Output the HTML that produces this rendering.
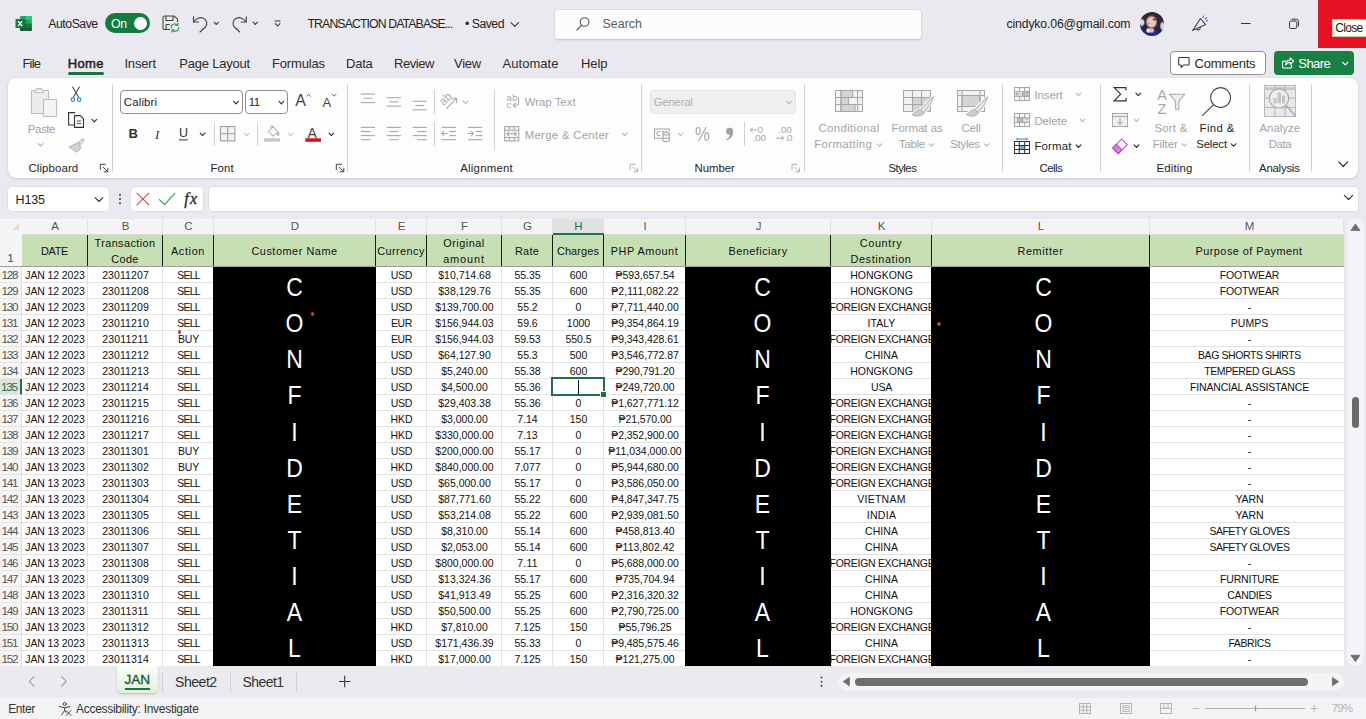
<!DOCTYPE html>
<html lang="en">
<head>
<meta charset="utf-8">
<title>TRANSACTION DATABASE - Excel</title>
<style>
*{box-sizing:border-box;margin:0;padding:0}
html,body{width:1366px;height:719px;overflow:hidden;background:#eae9f0;font-family:"Liberation Sans",sans-serif;color:#242424}
#app{position:relative;width:1366px;height:719px;overflow:hidden;background:#eae9f0}
svg{position:absolute;overflow:visible}
.abs{position:absolute}
/* ---- grid ---- */
#grid{position:absolute;left:0;top:218px;width:1344px;height:448px;overflow:hidden;background:#fff}
#grid>div{position:absolute}
#gl{left:0;top:49px;width:1344px;height:400px;background-image:linear-gradient(to bottom,transparent 15px,#e1e1e1 15px);background-size:100% 16px}
.vl{top:48px;width:1px;height:400px;background:#e1e1e1}
.rd{width:3.4px;height:3.4px;border-radius:2px;background:#d23a30;z-index:4}
#frz{left:0;top:48px;width:1344px;height:1px;background:#9c9c9c}
#selbox{left:551px;top:159px;width:54px;height:19px;border:2px solid #1f7244;background:#fff}
#selh{left:600px;top:173px;width:5px;height:5px;background:#1f7244;border:1px solid #fff;border-right:none;border-bottom:none;box-sizing:content-box}
#caret{left:578px;top:162px;width:1px;height:14px;background:#111}
.ch{top:1px;height:16px;background:#f5f5f5;border-right:1px solid #e3e3e3;border-bottom:1px solid #dadada;font-size:11.5px;line-height:14px;color:#555}
.ch b{position:absolute;width:20px;text-align:center;font-weight:normal;top:0}
.ch.sel{background:#e1e1e1;color:#1f7244;border-bottom:2px solid #1f7244;height:16px;z-index:3;border-right:none}
.hc{top:17px;height:31px;padding-top:0.5px;background:#c6e0b4;border-right:1px solid #1a1a1a;font-size:10.9px;line-height:16px;text-align:center;color:#111;display:flex;align-items:center;justify-content:center;white-space:nowrap}
.rn{left:0;width:22px;height:16px;background:#f5f5f5;border-bottom:1px solid #e6e6e6;border-right:1px solid #e0e0e0;font-size:11.7px;line-height:16px;text-align:center;color:#555;letter-spacing:-1.25px;padding-right:2px}
.rn.cur{background:#e1e1e1;color:#1f7244;border-right:2px solid #1f7244}
.c{height:16px;font-size:10.5px;line-height:17px;text-align:center;white-space:nowrap;color:#111}
.conf{top:49px;height:400px;background:#000;color:#fff;overflow:hidden}
.cv{position:absolute;left:0;top:0;height:420px;padding-top:6.2px;font-size:25px;writing-mode:vertical-rl;text-orientation:upright;letter-spacing:8.15px;text-align:left;white-space:nowrap}
</style>
</head>
<body>
<div id="app">
<svg style="left:0;top:0" width="1" height="1" ><g transform="translate(15.5,15.5)">
<path d="M5.5 0.5 H15.3 a1 1 0 0 1 1 1 V14.5 a1 1 0 0 1 -1 1 H5.5 a1 1 0 0 1 -1 -1 V1.5 a1 1 0 0 1 1 -1z" fill="#21a366"/>
<path d="M10.5 0.5 H15.3 a1 1 0 0 1 1 1 V4.3 H10.5z" fill="#33c481"/>
<path d="M4.5 4.3 H10.5 V8 H4.5z" fill="#107c41"/>
<path d="M10.5 8 H16.3 V11.7 H10.5z" fill="#107c41"/>
<path d="M4.5 8 H10.5 V11.7 H4.5z" fill="#185c37"/>
<path d="M4.5 11.7 H16.3 V14.5 a1 1 0 0 1 -1 1 H5.5 a1 1 0 0 1 -1 -1z" fill="#185c37"/>
<rect x="0" y="3.6" width="9.2" height="8.9" rx="0.9" fill="#107c41"/>
<path d="M2.6 5.6 L6.6 10.5 M6.6 5.6 L2.6 10.5" stroke="#fff" stroke-width="1.35" fill="none"/>
</g></svg>
<span style="position:absolute;white-space:nowrap;left:48.3px;top:18.1px;font-size:12.3px;line-height:12.3px;color:#242424;letter-spacing:-0.49px;">AutoSave</span>
<div class="abs" style="left:105px;top:13px;width:45px;height:20px;border-radius:10px;background:#107c41"></div>
<div class="abs" style="left:133.5px;top:16.5px;width:13px;height:13px;border-radius:7px;background:#fff"></div>
<span style="position:absolute;white-space:nowrap;left:111.0px;top:17.8px;font-size:12.3px;line-height:12.3px;color:#fff;letter-spacing:-0.20px;">On</span>
<svg style="left:0;top:0" width="1" height="1" ><g fill="none" stroke="#444" stroke-width="1.1" stroke-linejoin="round">
<path d="M170 29.5 H164.5 a1.5 1.5 0 0 1 -1.5 -1.5 V17.5 a1.5 1.5 0 0 1 1.5 -1.5 H174 l3.5 3.2 V22"/>
<path d="M166 16 V20.5 H173 V16"/>
<path d="M166 29.5 V24.5 H169.5"/>
</g>
<g fill="none" stroke="#3aa35f" stroke-width="1.2" stroke-linecap="round" stroke-linejoin="round">
<path d="M171.2 27.8 a3.6 3.6 0 0 1 6.3 -2.6 M177.8 23.2 v2.2 h-2.2"/>
<path d="M178.6 27.4 a3.6 3.6 0 0 1 -6.3 2.6 M172 32 v-2.2 h2.2"/>
</g></svg>
<svg style="left:0;top:0" width="1" height="1" ><g fill="none" stroke="#444" stroke-width="1.15" stroke-linecap="round" stroke-linejoin="round">
<path d="M193.5 16.8 V22 H198.7"/>
<path d="M193.8 21.8 C196 18.5 200 16.6 203.5 18.3 C207.2 20.2 207.6 24.6 205.4 27 L200 32"/>
</g></svg>
<svg style="left:0;top:0" width="1" height="1"><path d="M214.1 22.2 L216.3 24.5 L218.5 22.2" fill="none" stroke="#444" stroke-width="1.1" stroke-linecap="round" stroke-linejoin="round"/></svg>
<svg style="left:0;top:0" width="1" height="1" ><g fill="none" stroke="#444" stroke-width="1.15" stroke-linecap="round" stroke-linejoin="round">
<path d="M246.3 16.8 V22 H241.1"/>
<path d="M246 21.8 C243.8 18.5 239.8 16.6 236.3 18.3 C232.6 20.2 232.2 24.6 234.4 27 L239.8 32"/>
</g></svg>
<svg style="left:0;top:0" width="1" height="1"><path d="M253.1 22.2 L255.3 24.5 L257.5 22.2" fill="none" stroke="#444" stroke-width="1.1" stroke-linecap="round" stroke-linejoin="round"/></svg>
<svg style="left:0;top:0" width="1" height="1" ><path d="M274.6 21 H280.6" stroke="#444" stroke-width="1.1" fill="none"/></svg>
<svg style="left:0;top:0" width="1" height="1"><path d="M275.3 23.6 L277.6 26.0 L279.9 23.6" fill="none" stroke="#444" stroke-width="1.1" stroke-linecap="round" stroke-linejoin="round"/></svg>
<span style="position:absolute;white-space:nowrap;left:307.5px;top:18.2px;font-size:12.3px;line-height:12.3px;color:#242424;letter-spacing:-0.90px;">TRANSACTION DATABASE...</span>
<span style="position:absolute;white-space:nowrap;left:465.0px;top:18.2px;font-size:12.3px;line-height:12.3px;color:#242424;letter-spacing:-0.51px;">• Saved</span>
<svg style="left:0;top:0" width="1" height="1"><path d="M511.0 22.6 L514.8 26.4 L518.5 22.6" fill="none" stroke="#333" stroke-width="1.1" stroke-linecap="round" stroke-linejoin="round"/></svg>
<div class="abs" style="left:554px;top:9px;width:368px;height:31px;border-radius:4px;background:#fcfcfd;border:1px solid #dcdce0;border-bottom-color:#c9c9ce;box-shadow:0 1px 2px rgba(0,0,0,.06)"></div>
<svg style="left:0;top:0" width="1" height="1" ><circle cx="584.6" cy="22" r="4.3" fill="none" stroke="#555" stroke-width="1.1"/><path d="M581.6 25.2 L577 30" stroke="#555" stroke-width="1.1" stroke-linecap="round"/></svg>
<span style="position:absolute;white-space:nowrap;left:602.5px;top:18.3px;font-size:12.3px;line-height:12.3px;color:#5a5a5a;letter-spacing:0.09px;">Search</span>
<span style="position:absolute;white-space:nowrap;left:1006.5px;top:18.2px;font-size:12.3px;line-height:12.3px;color:#242424;letter-spacing:-0.17px;">cindyko.06@gmail.com</span>
<div class="abs" style="left:1139.8px;top:11.5px;width:24px;height:24px;border-radius:12px;overflow:hidden;background:#e4e4ea"><div class="abs" style="left:-1px;top:-1px;width:26px;height:26px;filter:blur(0.5px);background:
radial-gradient(ellipse 2px 1.2px at 9.5px 12.5px,#d98a9a 60%,transparent 100%),
radial-gradient(ellipse 2.4px 1.3px at 15.5px 8.5px,#5a3a3c 40%,transparent 100%),
radial-gradient(ellipse 6.2px 7px at 12.5px 11px,#ecc8ba 62%,transparent 100%),
radial-gradient(ellipse 3.4px 3px at 12.5px 19.5px,#e3bfb2 50%,transparent 100%),
radial-gradient(ellipse 3px 3px at 9.5px 19.5px,#f4f4f8 40%,transparent 100%),
radial-gradient(ellipse 11px 6.5px at 12px 24.5px,#1b2b86 72%,transparent 100%),
radial-gradient(ellipse 3px 4.4px at 3px 11.5px,#d3dfea 50%,transparent 100%),
radial-gradient(ellipse 3px 5px at 23.5px 15px,#ccd8cf 50%,transparent 100%),
radial-gradient(ellipse 10.5px 10px at 12.5px 10.5px,#33262b 80%,transparent 100%),
#20264e"></div></div>
<svg style="left:0;top:0" width="1" height="1" ><g fill="none" stroke="#444" stroke-width="1.1" stroke-linejoin="round" stroke-linecap="round">
<path d="M1200.5 18.5 L1205.5 24.6 L1192.6 30.6 Z"/>
<path d="M1196.6 29 a2 2 0 0 0 3.6 -1.6"/>
</g>
<g stroke="#2b7cd3" stroke-width="1.1" stroke-linecap="round"><path d="M1203 17.4 L1203.6 16 M1205 19 L1206.6 17.6 M1206.2 21 L1207.6 20.6"/></g></svg>
<svg style="left:0;top:0" width="1" height="1" ><path d="M1241 23.5 H1250.5" stroke="#333" stroke-width="1"/></svg>
<svg style="left:0;top:0" width="1" height="1" ><rect x="1289.5" y="21" width="7.3" height="7.5" rx="1.6" fill="none" stroke="#333" stroke-width="1"/><path d="M1291.6 19.2 H1296.3 a2.2 2.2 0 0 1 2.2 2.2 V26.3" fill="none" stroke="#333" stroke-width="1"/></svg>
<div class="abs" style="left:1318px;top:0;width:48px;height:48px;background:#e81123"></div>
<div class="abs" style="left:1332px;top:19px;width:34px;height:18px;background:#ffffea;border:1px solid #c9c9bd;border-right:none"></div>
<span style="position:absolute;white-space:nowrap;left:1335.3px;top:21.8px;font-size:12px;line-height:12px;color:#1a1a1a;letter-spacing:-0.68px;">Close</span>
<span style="position:absolute;white-space:nowrap;left:22.4px;top:57.2px;font-size:13px;line-height:13px;color:#2b2b2b;letter-spacing:-0.76px;">File</span>
<span style="position:absolute;white-space:nowrap;left:67.7px;top:57.2px;font-size:13px;line-height:13px;color:#1f1f1f;letter-spacing:0.36px;-webkit-text-stroke:0.5px #1f1f1f;">Home</span>
<span style="position:absolute;white-space:nowrap;left:124.4px;top:57.2px;font-size:13px;line-height:13px;color:#2b2b2b;letter-spacing:-0.15px;">Insert</span>
<span style="position:absolute;white-space:nowrap;left:179.2px;top:57.2px;font-size:13px;line-height:13px;color:#2b2b2b;letter-spacing:-0.20px;">Page Layout</span>
<span style="position:absolute;white-space:nowrap;left:272.0px;top:57.2px;font-size:13px;line-height:13px;color:#2b2b2b;letter-spacing:-0.17px;">Formulas</span>
<span style="position:absolute;white-space:nowrap;left:346.0px;top:57.2px;font-size:13px;line-height:13px;color:#2b2b2b;letter-spacing:-0.24px;">Data</span>
<span style="position:absolute;white-space:nowrap;left:394.0px;top:57.2px;font-size:13px;line-height:13px;color:#2b2b2b;letter-spacing:-0.44px;">Review</span>
<span style="position:absolute;white-space:nowrap;left:454.0px;top:57.2px;font-size:13px;line-height:13px;color:#2b2b2b;letter-spacing:-0.24px;">View</span>
<span style="position:absolute;white-space:nowrap;left:502.5px;top:57.2px;font-size:13px;line-height:13px;color:#2b2b2b;letter-spacing:0.04px;">Automate</span>
<span style="position:absolute;white-space:nowrap;left:581.0px;top:57.2px;font-size:13px;line-height:13px;color:#2b2b2b;letter-spacing:-0.06px;">Help</span>
<div class="abs" style="left:68px;top:72px;width:36px;height:3px;border-radius:1.5px;background:#1e7145"></div>
<div class="abs" style="left:1170px;top:51px;width:96px;height:24px;border-radius:4px;background:#fff;border:1px solid #919191"></div>
<svg style="left:0;top:0" width="1" height="1" ><path d="M1179.5 57.5 H1188.3 a0.8 0.8 0 0 1 .8 .8 V64.2 a0.8 0.8 0 0 1 -.8 .8 H1183.6 L1181.2 67.6 V65 H1179.5 a0.8 0.8 0 0 1 -.8 -.8 V58.3 a0.8 0.8 0 0 1 .8 -.8z" fill="none" stroke="#333" stroke-width="1.05" stroke-linejoin="round"/></svg>
<span style="position:absolute;white-space:nowrap;left:1194.6px;top:56.6px;font-size:13px;line-height:13px;color:#1f1f1f;letter-spacing:-0.27px;">Comments</span>
<div class="abs" style="left:1274px;top:51px;width:80px;height:24px;border-radius:4px;background:#1a7f45"></div>
<svg style="left:0;top:0" width="1" height="1" ><g fill="none" stroke="#fff" stroke-width="1.1" stroke-linejoin="round" stroke-linecap="round">
<path d="M1286 61 H1283.6 a1 1 0 0 0 -1 1 V67 a1 1 0 0 0 1 1 H1290.6 a1 1 0 0 0 1 -1 V65"/>
<path d="M1285.6 65 C1285.8 61.5 1288 60 1290.2 60 V57.8 L1293.6 61.1 L1290.2 64.4 V62.2 C1288.4 62.2 1286.8 62.8 1285.6 65z"/>
</g></svg>
<span style="position:absolute;white-space:nowrap;left:1298.3px;top:56.6px;font-size:13px;line-height:13px;color:#fff;letter-spacing:-0.54px;">Share</span>
<svg style="left:0;top:0" width="1" height="1"><path d="M1342.7 62.3 L1345.2 64.9 L1347.7 62.3" fill="none" stroke="#fff" stroke-width="1.2" stroke-linecap="round" stroke-linejoin="round"/></svg>
<div class="abs" style="left:8px;top:78px;width:1350px;height:100px;border-radius:8px;background:#fdfdfe;box-shadow:0 1px 3px rgba(0,0,0,.13),0 0 1px rgba(0,0,0,.10)"></div>
<svg style="left:0;top:0" width="1" height="1" ><g stroke="#bdbdbd" stroke-width="1.1" stroke-linejoin="round">
<path d="M31.5 90.5 H35.6 C35.6 87.6 42.4 87.6 42.4 90.5 H48.5 V113.5 H31.5z" fill="#ececec"/>
<path d="M34.8 90.5 V92.8 H43.2 V90.5" fill="#f6f6f6"/>
<rect x="43.5" y="99.5" width="13" height="17" fill="#f4f4f4"/>
</g></svg>
<span style="position:absolute;white-space:nowrap;left:27.8px;top:123.5px;font-size:11.4px;line-height:11.4px;color:#a3a3a3;letter-spacing:-0.39px;">Paste</span>
<svg style="left:0;top:0" width="1" height="1"><path d="M38.4 143.6 L40.7 146.0 L43.0 143.6" fill="none" stroke="#b5b5b5" stroke-width="1.1" stroke-linecap="round" stroke-linejoin="round"/></svg>
<svg style="left:0;top:0" width="1" height="1" ><g fill="none" stroke-linecap="round">
<path d="M72.6 87 L78.6 97.2 M79.4 87 L73.4 97.2" stroke="#444" stroke-width="1.05"/>
<circle cx="72.9" cy="99.6" r="1.75" stroke="#2b7cd3" stroke-width="1.05"/>
<circle cx="79.1" cy="99.6" r="1.75" stroke="#2b7cd3" stroke-width="1.05"/>
</g></svg>
<svg style="left:0;top:0" width="1" height="1" ><g fill="none" stroke="#333" stroke-width="1.1" stroke-linejoin="round">
<path d="M74.5 125 H68.6 V112.6 H75.2"/>
<path d="M74.5 115.6 H80.4 L83.5 118.8 V127.4 H74.5z" fill="#fdfdfe"/>
<path d="M76.8 121 H81.2 M76.8 123.6 H81.2" stroke-width="0.9"/>
</g></svg>
<svg style="left:0;top:0" width="1" height="1"><path d="M92.1 119.4 L94.4 121.8 L96.7 119.4" fill="none" stroke="#333" stroke-width="1.2" stroke-linecap="round" stroke-linejoin="round"/></svg>
<svg style="left:0;top:0" width="1" height="1" ><g stroke="#b0b0b0" stroke-width="1" stroke-linejoin="round">
<path d="M69.2 147 L78.2 142.4 L81 147.8 L76.4 152.2 C74 150 71.6 148.6 69.2 147z" fill="#d5d5d5"/>
<path d="M78.6 142.2 L82.6 138.6 L84 140.4 L80.8 144.6z" fill="#e4e4e4"/>
</g></svg>
<span style="position:absolute;white-space:nowrap;left:28.5px;top:162.7px;font-size:11.4px;line-height:11.4px;color:#242424;letter-spacing:0.11px;">Clipboard</span>
<svg style="left:0;top:0" width="1" height="1" ><path d="M100.3 169.8 V164.3 H105.8" fill="none" stroke="#444" stroke-width="1"/><path d="M102.8 166.8 L107.5 171.5 M107.8 167.70000000000002 V171.8 H103.7" fill="none" stroke="#444" stroke-width="1"/></svg>
<div class="abs" style="left:112px;top:84px;width:1px;height:88px;background:#d1d1d1"></div>
<div class="abs" style="left:120px;top:90px;width:123px;height:24px;border-radius:4px;background:#fff;border:1px solid #8f8f8f"></div>
<span style="position:absolute;white-space:nowrap;left:123.8px;top:96.7px;font-size:11.4px;line-height:11.4px;color:#242424;letter-spacing:0.17px;">Calibri</span>
<svg style="left:0;top:0" width="1" height="1"><path d="M233.7 101.4 L236.0 103.8 L238.3 101.4" fill="none" stroke="#333" stroke-width="1.2" stroke-linecap="round" stroke-linejoin="round"/></svg>
<div class="abs" style="left:245px;top:90px;width:43px;height:24px;border-radius:4px;background:#fff;border:1px solid #8f8f8f"></div>
<span style="position:absolute;white-space:nowrap;left:248.8px;top:96.7px;font-size:11.4px;line-height:11.4px;color:#242424;letter-spacing:-0.52px;">11</span>
<svg style="left:0;top:0" width="1" height="1"><path d="M279.0 101.4 L281.3 103.8 L283.6 101.4" fill="none" stroke="#333" stroke-width="1.2" stroke-linecap="round" stroke-linejoin="round"/></svg>
<span style="position:absolute;white-space:nowrap;left:295.3px;top:93.3px;font-size:16px;line-height:16px;color:#444;letter-spacing:0.23px;">A</span>
<svg style="left:0;top:0" width="1" height="1"><path d="M306.8 96.2 L308.6 94.2 L310.4 96.2" fill="none" stroke="#2b7cd3" stroke-width="1.0" stroke-linecap="round" stroke-linejoin="round"/></svg>
<span style="position:absolute;white-space:nowrap;left:322.6px;top:95.8px;font-size:13px;line-height:13px;color:#444;letter-spacing:0.03px;">A</span>
<svg style="left:0;top:0" width="1" height="1"><path d="M332.4 94.2 L334.2 96.2 L336.0 94.2" fill="none" stroke="#2b7cd3" stroke-width="1.0" stroke-linecap="round" stroke-linejoin="round"/></svg>
<span style="position:absolute;white-space:nowrap;left:128.4px;top:127.4px;font-size:13px;line-height:13px;color:#333;letter-spacing:-1.39px;font-weight:bold;">B</span>
<span style="position:absolute;white-space:nowrap;left:155.0px;top:127.5px;font-size:13px;line-height:13px;color:#333;letter-spacing:1.17px;font-style:italic;font-family:'Liberation Serif',serif;">I</span>
<span style="position:absolute;white-space:nowrap;left:179.0px;top:127.2px;font-size:12.5px;line-height:12.5px;color:#333;letter-spacing:-0.23px;">U</span>
<svg style="left:0;top:0" width="1" height="1" ><path d="M179 139.9 H187.8" stroke="#333" stroke-width="1.0" fill="none"/></svg>
<svg style="left:0;top:0" width="1" height="1"><path d="M200.3 133.2 L202.6 135.6 L204.9 133.2" fill="none" stroke="#333" stroke-width="1.2" stroke-linecap="round" stroke-linejoin="round"/></svg>
<div class="abs" style="left:213.5px;top:123px;width:1px;height:23px;background:#d1d1d1"></div>
<svg style="left:0;top:0" width="1" height="1" ><rect x="220.5" y="126.5" width="14.4" height="14.4" fill="#f2f2f2" stroke="#9f9f9f" stroke-width="1.1"/>
<path d="M227.7 126.5 V140.9 M220.5 133.7 H234.9" stroke="#9f9f9f" stroke-width="1.1"/></svg>
<svg style="left:0;top:0" width="1" height="1"><path d="M244.4 133.2 L246.7 135.6 L249.0 133.2" fill="none" stroke="#c4c4c4" stroke-width="1.1" stroke-linecap="round" stroke-linejoin="round"/></svg>
<div class="abs" style="left:257px;top:123px;width:1px;height:23px;background:#d1d1d1"></div>
<svg style="left:0;top:0" width="1" height="1" ><g fill="none" stroke="#b3b3b3" stroke-width="1.05" stroke-linejoin="round">
<path d="M268.4 131.4 L273.2 126.8 L278 131.8 L273 136.2z"/>
<path d="M271.2 128.4 C270 125.6 272.6 124.8 273.6 127"/>
<path d="M278.2 132.4 C279.2 133.8 279.2 135 278.2 135.4 C277.2 135 277.2 133.8 278.2 132.4z" fill="#b3b3b3"/>
</g>
<rect x="264" y="138.3" width="16" height="3.4" fill="#c8c8c8"/></svg>
<svg style="left:0;top:0" width="1" height="1"><path d="M288.3 133.2 L290.6 135.6 L292.9 133.2" fill="none" stroke="#c4c4c4" stroke-width="1.1" stroke-linecap="round" stroke-linejoin="round"/></svg>
<span style="position:absolute;white-space:nowrap;left:307.6px;top:125.6px;font-size:14px;line-height:14px;color:#444;letter-spacing:1.46px;">A</span>
<svg style="left:0;top:0" width="1" height="1" ><rect x="305.4" y="138.3" width="15.6" height="3.5" fill="#e00b1c"/></svg>
<svg style="left:0;top:0" width="1" height="1"><path d="M329.1 133.2 L331.4 135.6 L333.7 133.2" fill="none" stroke="#333" stroke-width="1.2" stroke-linecap="round" stroke-linejoin="round"/></svg>
<span style="position:absolute;white-space:nowrap;left:210.5px;top:162.7px;font-size:11.4px;line-height:11.4px;color:#242424;letter-spacing:0.15px;">Font</span>
<svg style="left:0;top:0" width="1" height="1" ><path d="M336.3 169.8 V164.3 H341.8" fill="none" stroke="#444" stroke-width="1"/><path d="M338.8 166.8 L343.5 171.5 M343.8 167.70000000000002 V171.8 H339.7" fill="none" stroke="#444" stroke-width="1"/></svg>
<div class="abs" style="left:347px;top:84px;width:1px;height:88px;background:#d1d1d1"></div>
<svg style="left:0;top:0" width="1" height="1" ><path d="M360.8 94 H375.0" stroke="#a8a8a8" stroke-width="1.1" fill="none"/><path d="M363.6 98.3 H372.2" stroke="#a8a8a8" stroke-width="1.1" fill="none"/><path d="M360.8 102.6 H375.0" stroke="#a8a8a8" stroke-width="1.1" fill="none"/></svg>
<svg style="left:0;top:0" width="1" height="1" ><path d="M386.7 97.7 H400.9" stroke="#a8a8a8" stroke-width="1.1" fill="none"/><path d="M389.5 101.9 H398.09999999999997" stroke="#a8a8a8" stroke-width="1.1" fill="none"/><path d="M386.7 106.1 H400.9" stroke="#a8a8a8" stroke-width="1.1" fill="none"/></svg>
<svg style="left:0;top:0" width="1" height="1" ><path d="M412.6 101.3 H426.8" stroke="#a8a8a8" stroke-width="1.1" fill="none"/><path d="M415.40000000000003 105.5 H424.0" stroke="#a8a8a8" stroke-width="1.1" fill="none"/><path d="M412.6 109.8 H426.8" stroke="#a8a8a8" stroke-width="1.1" fill="none"/></svg>
<div class="abs" style="left:434px;top:90px;width:1px;height:24px;background:#d1d1d1"></div>
<span style="position:absolute;white-space:nowrap;left:444.2px;top:96.7px;font-size:11.5px;line-height:11.5px;color:#a8a8a8;letter-spacing:0.00px;transform:rotate(-47deg);transform-origin:0 80%;">ab</span>
<svg style="left:0;top:0" width="1" height="1" ><path d="M446.4 108.6 L456.4 98.4 M452.2 98.2 H456.6 V102.6" fill="none" stroke="#a8a8a8" stroke-width="1.05" stroke-linecap="round" stroke-linejoin="round"/></svg>
<svg style="left:0;top:0" width="1" height="1"><path d="M463.3 101.2 L465.6 103.6 L467.9 101.2" fill="none" stroke="#b5b5b5" stroke-width="1.1" stroke-linecap="round" stroke-linejoin="round"/></svg>
<div class="abs" style="left:493.5px;top:89px;width:1px;height:62px;background:#d1d1d1"></div>
<span style="position:absolute;white-space:nowrap;left:506.6px;top:93.0px;font-size:9.5px;line-height:9.5px;color:#a8a8a8;letter-spacing:0.32px;">ab</span>
<span style="position:absolute;white-space:nowrap;left:506.6px;top:100.4px;font-size:9.5px;line-height:9.5px;color:#a8a8a8;letter-spacing:-0.05px;">c</span>
<svg style="left:0;top:0" width="1" height="1" ><path d="M518.6 98 V103.6 a1.6 1.6 0 0 1 -1.6 1.6 H513.4 M515.6 102.8 L513.2 105.2 L515.6 107.6" fill="none" stroke="#a8a8a8" stroke-width="1.05" stroke-linecap="round" stroke-linejoin="round"/></svg>
<span style="position:absolute;white-space:nowrap;left:524.7px;top:97.4px;font-size:11.4px;line-height:11.4px;color:#a3a3a3;letter-spacing:0.00px;">Wrap Text</span>
<svg style="left:0;top:0" width="1" height="1" ><path d="M360.8 127.4 H375.0" stroke="#a8a8a8" stroke-width="1.1" fill="none"/><path d="M360.8 131.5 H370.40000000000003" stroke="#a8a8a8" stroke-width="1.1" fill="none"/><path d="M360.8 135.6 H375.0" stroke="#a8a8a8" stroke-width="1.1" fill="none"/><path d="M360.8 139.7 H370.40000000000003" stroke="#a8a8a8" stroke-width="1.1" fill="none"/></svg>
<svg style="left:0;top:0" width="1" height="1" ><path d="M386.7 127.4 H400.9" stroke="#a8a8a8" stroke-width="1.1" fill="none"/><path d="M389.5 131.5 H398.09999999999997" stroke="#a8a8a8" stroke-width="1.1" fill="none"/><path d="M386.7 135.6 H400.9" stroke="#a8a8a8" stroke-width="1.1" fill="none"/><path d="M389.5 139.7 H398.09999999999997" stroke="#a8a8a8" stroke-width="1.1" fill="none"/></svg>
<svg style="left:0;top:0" width="1" height="1" ><path d="M412.6 127.4 H426.8" stroke="#a8a8a8" stroke-width="1.1" fill="none"/><path d="M417.20000000000005 131.5 H426.8" stroke="#a8a8a8" stroke-width="1.1" fill="none"/><path d="M412.6 135.6 H426.8" stroke="#a8a8a8" stroke-width="1.1" fill="none"/><path d="M417.20000000000005 139.7 H426.8" stroke="#a8a8a8" stroke-width="1.1" fill="none"/></svg>
<div class="abs" style="left:434px;top:122px;width:1px;height:24px;background:#d1d1d1"></div>
<svg style="left:0;top:0" width="1" height="1" ><path d="M441.6 127.4 H456" stroke="#a8a8a8" stroke-width="1.1" fill="none"/><path d="M449.4 131.5 H456" stroke="#a8a8a8" stroke-width="1.1" fill="none"/><path d="M449.4 135.6 H456" stroke="#a8a8a8" stroke-width="1.1" fill="none"/><path d="M441.6 139.7 H456" stroke="#a8a8a8" stroke-width="1.1" fill="none"/><path d="M441.8 133.5 H447.2 M443.8 131.4 L441.8 133.5 L443.8 135.6" fill="none" stroke="#a8a8a8" stroke-width="1.05" stroke-linecap="round" stroke-linejoin="round"/></svg>
<svg style="left:0;top:0" width="1" height="1" ><path d="M467.8 127.4 H482.2" stroke="#a8a8a8" stroke-width="1.1" fill="none"/><path d="M475.6 131.5 H482.2" stroke="#a8a8a8" stroke-width="1.1" fill="none"/><path d="M475.6 135.6 H482.2" stroke="#a8a8a8" stroke-width="1.1" fill="none"/><path d="M467.8 139.7 H482.2" stroke="#a8a8a8" stroke-width="1.1" fill="none"/><path d="M468 133.5 H473.4 M471.4 131.4 L473.4 133.5 L471.4 135.6" fill="none" stroke="#a8a8a8" stroke-width="1.05" stroke-linecap="round" stroke-linejoin="round"/></svg>
<svg style="left:0;top:0" width="1" height="1" ><g fill="none" stroke="#a8a8a8" stroke-width="1.05">
<rect x="504.6" y="126.6" width="14.2" height="14.4" fill="#f4f4f4"/>
<path d="M504.6 130.2 H518.8 M504.6 137.4 H518.8 M509.3 126.6 V130.2 M514.1 126.6 V130.2 M509.3 137.4 V141 M514.1 137.4 V141"/>
<path d="M507 133.8 H516.4 M508.8 132 L507 133.8 L508.8 135.6 M514.6 132 L516.4 133.8 L514.6 135.6" stroke-linecap="round" stroke-linejoin="round"/>
</g></svg>
<span style="position:absolute;white-space:nowrap;left:524.7px;top:129.7px;font-size:11.4px;line-height:11.4px;color:#a3a3a3;letter-spacing:0.29px;">Merge &amp; Center</span>
<svg style="left:0;top:0" width="1" height="1"><path d="M622.3 133.2 L624.6 135.6 L626.9 133.2" fill="none" stroke="#b5b5b5" stroke-width="1.1" stroke-linecap="round" stroke-linejoin="round"/></svg>
<span style="position:absolute;white-space:nowrap;left:460.3px;top:162.7px;font-size:11.4px;line-height:11.4px;color:#242424;letter-spacing:0.22px;">Alignment</span>
<svg style="left:0;top:0" width="1" height="1" ><path d="M630.2 169.8 V164.3 H635.7" fill="none" stroke="#b0b0b0" stroke-width="1"/><path d="M632.7 166.8 L637.4000000000001 171.5 M637.7 167.70000000000002 V171.8 H633.6" fill="none" stroke="#b0b0b0" stroke-width="1"/></svg>
<div class="abs" style="left:641px;top:84px;width:1px;height:88px;background:#d1d1d1"></div>
<div class="abs" style="left:650px;top:90px;width:146px;height:24px;border-radius:4px;background:#efefef;border:1px solid #e4e4e4"></div>
<span style="position:absolute;white-space:nowrap;left:653.8px;top:96.7px;font-size:11.4px;line-height:11.4px;color:#b0b0b0;letter-spacing:-0.25px;">General</span>
<svg style="left:0;top:0" width="1" height="1"><path d="M786.5 101.4 L788.8 103.8 L791.1 101.4" fill="none" stroke="#b5b5b5" stroke-width="1.1" stroke-linecap="round" stroke-linejoin="round"/></svg>
<svg style="left:0;top:0" width="1" height="1" ><g fill="none" stroke="#a8a8a8" stroke-width="1.05" stroke-linejoin="round">
<path d="M662 138.2 H654.5 V129 H669.3 V131.4"/>
<path d="M659.6 131.8 a2 2 0 1 0 0 3.6" stroke-linecap="round"/>
<path d="M662 131.6 H664.2 M665.4 131.6 H667"/>
<path d="M662.8 133.6 v6.6 a3.3 1.4 0 0 0 6.6 0 v-6.6 a3.3 1.4 0 0 0 -6.6 0 a3.3 1.4 0 0 0 6.6 0 M662.8 136.9 a3.3 1.4 0 0 0 6.6 0" fill="#f4f4f4"/>
</g></svg>
<svg style="left:0;top:0" width="1" height="1"><path d="M678.3 133.2 L680.6 135.6 L682.9 133.2" fill="none" stroke="#c0c0c0" stroke-width="1.1" stroke-linecap="round" stroke-linejoin="round"/></svg>
<span style="position:absolute;white-space:nowrap;left:695.4px;top:124.9px;font-size:19.4px;line-height:19.4px;color:#a8a8a8;letter-spacing:0.00px;transform:scaleX(.86);transform-origin:0 0;">%</span>
<svg style="left:0;top:0" width="1" height="1" ><path d="M733.1 131.6 C733.5 136 730.6 139.3 726.3 140.3 L726 139.5 C728.5 138.3 729.9 136.5 729.8 134.8 A3.5 3.5 0 1 1 733.1 131.6z" fill="#a0a0a0"/></svg>
<div class="abs" style="left:743.5px;top:122px;width:1px;height:24px;background:#d1d1d1"></div>
<span style="position:absolute;white-space:nowrap;left:757.6px;top:125.3px;font-size:9.8px;line-height:9.8px;color:#a8a8a8;letter-spacing:2.55px;">0</span>
<span style="position:absolute;white-space:nowrap;left:752.8px;top:132.9px;font-size:9.8px;line-height:9.8px;color:#a8a8a8;letter-spacing:-0.27px;">.00</span>
<svg style="left:0;top:0" width="1" height="1" ><path d="M750.4 130 H756.4 M752.4 128 L750.4 130 L752.4 132" fill="none" stroke="#a8a8a8" stroke-width="1" stroke-linecap="round" stroke-linejoin="round"/></svg>
<span style="position:absolute;white-space:nowrap;left:778.6px;top:125.3px;font-size:9.8px;line-height:9.8px;color:#a8a8a8;letter-spacing:-0.27px;">.00</span>
<span style="position:absolute;white-space:nowrap;left:785.2px;top:132.9px;font-size:9.8px;line-height:9.8px;color:#a8a8a8;letter-spacing:-0.99px;">.0</span>
<svg style="left:0;top:0" width="1" height="1" ><path d="M776.2 138.2 H783.6 M781.6 136.2 L783.6 138.2 L781.6 140.2" fill="none" stroke="#a8a8a8" stroke-width="1" stroke-linecap="round" stroke-linejoin="round"/></svg>
<span style="position:absolute;white-space:nowrap;left:694.6px;top:162.7px;font-size:11.4px;line-height:11.4px;color:#242424;letter-spacing:-0.06px;">Number</span>
<svg style="left:0;top:0" width="1" height="1" ><path d="M792 169.8 V164.3 H797.5" fill="none" stroke="#b0b0b0" stroke-width="1"/><path d="M794.5 166.8 L799.2 171.5 M799.5 167.70000000000002 V171.8 H795.4" fill="none" stroke="#b0b0b0" stroke-width="1"/></svg>
<div class="abs" style="left:803.5px;top:84px;width:1px;height:88px;background:#d1d1d1"></div>
<svg style="left:0;top:0" width="1" height="1" ><g stroke="#a8a8a8" stroke-width="1.05" fill="none">
<rect x="835.5" y="90.5" width="27" height="21" fill="#f3f3f3"/>
<rect x="841" y="90.5" width="11.6" height="7" fill="#d4d4d4"/>
<rect x="841" y="97.5" width="7.4" height="7" fill="#d4d4d4"/>
<rect x="841" y="104.5" width="14" height="7" fill="#d4d4d4"/>
<path d="M835.5 97.5 H862.5 M835.5 104.5 H862.5 M841 90.5 V111.5 M857.6 90.5 V111.5"/>
</g></svg>
<span style="position:absolute;white-space:nowrap;left:818.4px;top:122.7px;font-size:11.4px;line-height:11.4px;color:#a3a3a3;letter-spacing:0.38px;">Conditional</span>
<span style="position:absolute;white-space:nowrap;left:814.3px;top:139.1px;font-size:11.4px;line-height:11.4px;color:#a3a3a3;letter-spacing:0.35px;">Formatting</span>
<svg style="left:0;top:0" width="1" height="1"><path d="M877.2 143.8 L879.5 146.2 L881.8 143.8" fill="none" stroke="#b5b5b5" stroke-width="1.1" stroke-linecap="round" stroke-linejoin="round"/></svg>
<svg style="left:0;top:0" width="1" height="1" ><g stroke="#a8a8a8" stroke-width="1.05" fill="none">
<rect x="903.5" y="90.5" width="27" height="21" fill="#f3f3f3"/>
<rect x="912.5" y="97.5" width="18" height="14" fill="#d4d4d4"/>
<path d="M903.5 97.5 H930.5 M903.5 104.5 H930.5 M912.5 90.5 V111.5 M921.5 90.5 V111.5"/>
</g></svg>
<svg style="left:0;top:0" width="1" height="1" ><g transform="translate(0,0)" stroke-linejoin="round">
<path d="M933.6 96.6 C928.6 100.8 923.6 106 920.4 109.8 L924.2 112.8 C927.6 108.6 932 102.6 933.6 96.6z" fill="#e2e2e2" stroke="#fdfdfe" stroke-width="3"/>
<path d="M920.2 109.6 C916.8 109.8 915 112.6 912.2 114.6 C916.4 117 922.4 116.4 924.2 112.8z" fill="#cdcdcd" stroke="#fdfdfe" stroke-width="3"/>
<path d="M933.6 96.6 C928.6 100.8 923.6 106 920.4 109.8 L924.2 112.8 C927.6 108.6 932 102.6 933.6 96.6z" fill="#e2e2e2" stroke="#b0b0b0" stroke-width="1"/>
<path d="M920.2 109.6 C916.8 109.8 915 112.6 912.2 114.6 C916.4 117 922.4 116.4 924.2 112.8z" fill="#cdcdcd" stroke="#b0b0b0" stroke-width="1"/>
</g></svg>
<span style="position:absolute;white-space:nowrap;left:891.5px;top:122.7px;font-size:11.4px;line-height:11.4px;color:#a3a3a3;letter-spacing:-0.01px;">Format as</span>
<span style="position:absolute;white-space:nowrap;left:899.0px;top:139.1px;font-size:11.4px;line-height:11.4px;color:#a3a3a3;letter-spacing:-0.29px;">Table</span>
<svg style="left:0;top:0" width="1" height="1"><path d="M929.1 143.8 L931.4 146.2 L933.7 143.8" fill="none" stroke="#b5b5b5" stroke-width="1.1" stroke-linecap="round" stroke-linejoin="round"/></svg>
<svg style="left:0;top:0" width="1" height="1" ><g stroke="#a8a8a8" stroke-width="1.05" fill="none">
<rect x="957.5" y="90.5" width="27" height="21" fill="#f3f3f3"/>
<rect x="962" y="95.5" width="18" height="11" fill="#d4d4d4"/>
<path d="M957.5 95.5 H984.5 M957.5 106.5 H984.5 M962 90.5 V111.5 M980 90.5 V111.5"/>
</g></svg>
<svg style="left:0;top:0" width="1" height="1" ><g transform="translate(54.2,0)" stroke-linejoin="round">
<path d="M933.6 96.6 C928.6 100.8 923.6 106 920.4 109.8 L924.2 112.8 C927.6 108.6 932 102.6 933.6 96.6z" fill="#e2e2e2" stroke="#fdfdfe" stroke-width="3"/>
<path d="M920.2 109.6 C916.8 109.8 915 112.6 912.2 114.6 C916.4 117 922.4 116.4 924.2 112.8z" fill="#cdcdcd" stroke="#fdfdfe" stroke-width="3"/>
<path d="M933.6 96.6 C928.6 100.8 923.6 106 920.4 109.8 L924.2 112.8 C927.6 108.6 932 102.6 933.6 96.6z" fill="#e2e2e2" stroke="#b0b0b0" stroke-width="1"/>
<path d="M920.2 109.6 C916.8 109.8 915 112.6 912.2 114.6 C916.4 117 922.4 116.4 924.2 112.8z" fill="#cdcdcd" stroke="#b0b0b0" stroke-width="1"/>
</g></svg>
<span style="position:absolute;white-space:nowrap;left:961.4px;top:122.7px;font-size:11.4px;line-height:11.4px;color:#a3a3a3;letter-spacing:-0.11px;">Cell</span>
<span style="position:absolute;white-space:nowrap;left:950.3px;top:139.1px;font-size:11.4px;line-height:11.4px;color:#a3a3a3;letter-spacing:-0.29px;">Styles</span>
<svg style="left:0;top:0" width="1" height="1"><path d="M984.2 143.8 L986.5 146.2 L988.8 143.8" fill="none" stroke="#b5b5b5" stroke-width="1.1" stroke-linecap="round" stroke-linejoin="round"/></svg>
<span style="position:absolute;white-space:nowrap;left:888.4px;top:162.7px;font-size:11.4px;line-height:11.4px;color:#242424;letter-spacing:-0.51px;">Styles</span>
<div class="abs" style="left:1001.5px;top:84px;width:1px;height:88px;background:#d1d1d1"></div>
<svg style="left:0;top:0" width="1" height="1" ><g stroke="#a8a8a8" stroke-width="1.05" fill="none"><rect x="1014.5" y="87.5" width="15" height="13" fill="#f6f6f6"/><path d="M1014.5 91.8 H1029.5 M1014.5 96.2 H1029.5 M1019.5 87.5 V91.8 M1024.5 87.5 V91.8 M1019.5 96.2 V100.5 M1024.5 96.2 V100.5"/><rect x="1022.4" y="91.8" width="7.1" height="4.4" fill="#bdbdbd"/><path d="M1015.8 94 H1021 M1017.8 92.2 L1015.8 94 L1017.8 95.8" stroke-linecap="round" stroke-linejoin="round"/></g></svg>
<span style="position:absolute;white-space:nowrap;left:1034.4px;top:89.9px;font-size:11.4px;line-height:11.4px;color:#a3a3a3;letter-spacing:-0.04px;">Insert</span>
<svg style="left:0;top:0" width="1" height="1"><path d="M1076.2 93.2 L1078.5 95.6 L1080.8 93.2" fill="none" stroke="#b5b5b5" stroke-width="1.1" stroke-linecap="round" stroke-linejoin="round"/></svg>
<svg style="left:0;top:0" width="1" height="1" ><g stroke="#a8a8a8" stroke-width="1.05" fill="none"><rect x="1014.5" y="113.5" width="15" height="13" fill="#f6f6f6"/><path d="M1014.5 117.8 H1029.5 M1014.5 122.2 H1029.5 M1019.5 113.5 V117.8 M1024.5 113.5 V117.8 M1019.5 122.2 V126.5 M1024.5 122.2 V126.5"/><rect x="1017.4" y="117.8" width="5.6" height="4.4" fill="#bdbdbd"/><path d="M1024.6 118 L1028.6 122 M1028.6 118 L1024.6 122" stroke-linecap="round"/></g></svg>
<span style="position:absolute;white-space:nowrap;left:1034.4px;top:115.7px;font-size:11.4px;line-height:11.4px;color:#a3a3a3;letter-spacing:-0.06px;">Delete</span>
<svg style="left:0;top:0" width="1" height="1"><path d="M1080.2 119.2 L1082.5 121.6 L1084.8 119.2" fill="none" stroke="#b5b5b5" stroke-width="1.1" stroke-linecap="round" stroke-linejoin="round"/></svg>
<svg style="left:0;top:0" width="1" height="1" ><g stroke="#333" stroke-width="1.05" fill="none">
<rect x="1014.5" y="141.5" width="15" height="12" fill="#fff"/>
<rect x="1019.3" y="145.5" width="5.4" height="4" fill="#5eb0f0" stroke="none"/>
<path d="M1014.5 145.5 H1029.5 M1014.5 149.5 H1029.5 M1019.3 141.5 V153.5 M1024.7 141.5 V153.5"/>
</g>
<path d="M1017 139 H1027 M1017 137.8 V140.2 M1027 137.8 V140.2" stroke="#2b7cd3" stroke-width="1" fill="none"/></svg>
<span style="position:absolute;white-space:nowrap;left:1034.4px;top:141.3px;font-size:11.4px;line-height:11.4px;color:#242424;letter-spacing:0.20px;">Format</span>
<svg style="left:0;top:0" width="1" height="1"><path d="M1076.2 145.0 L1078.5 147.4 L1080.8 145.0" fill="none" stroke="#333" stroke-width="1.2" stroke-linecap="round" stroke-linejoin="round"/></svg>
<span style="position:absolute;white-space:nowrap;left:1039.6px;top:162.7px;font-size:11.4px;line-height:11.4px;color:#242424;letter-spacing:-0.53px;">Cells</span>
<div class="abs" style="left:1099.5px;top:84px;width:1px;height:88px;background:#d1d1d1"></div>
<svg style="left:0;top:0" width="1" height="1" ><path d="M1126 90.4 V87.6 H1114.2 L1120.6 94.2 L1114.2 100.8 H1126 V98" fill="none" stroke="#333" stroke-width="1.15" stroke-linejoin="miter"/></svg>
<svg style="left:0;top:0" width="1" height="1"><path d="M1135.9 93.2 L1138.2 95.6 L1140.5 93.2" fill="none" stroke="#333" stroke-width="1.2" stroke-linecap="round" stroke-linejoin="round"/></svg>
<svg style="left:0;top:0" width="1" height="1" ><g stroke="#a8a8a8" stroke-width="1.05" fill="none"><rect x="1112.5" y="113.5" width="15" height="13" fill="#f1f1f1"/><path d="M1112.5 116.5 H1127.5"/>
<path d="M1120 118.6 V124 M1117.6 121.8 L1120 124.2 L1122.4 121.8" stroke-linecap="round" stroke-linejoin="round"/></g></svg>
<svg style="left:0;top:0" width="1" height="1"><path d="M1134.2 119.2 L1136.5 121.6 L1138.8 119.2" fill="none" stroke="#b5b5b5" stroke-width="1.1" stroke-linecap="round" stroke-linejoin="round"/></svg>
<svg style="left:0;top:0" width="1" height="1" ><g stroke-linejoin="round" stroke-width="1.05">
<path d="M1112.6 148 L1121.6 139 L1127.2 144.6 L1118.2 153.6z" fill="#fff" stroke="#b146c2"/>
<path d="M1112.6 148 L1116.4 144.2 L1122 149.8 L1118.2 153.6z" fill="#d77ee6" stroke="#b146c2"/>
</g></svg>
<svg style="left:0;top:0" width="1" height="1"><path d="M1134.2 145.0 L1136.5 147.4 L1138.8 145.0" fill="none" stroke="#333" stroke-width="1.2" stroke-linecap="round" stroke-linejoin="round"/></svg>
<span style="position:absolute;white-space:nowrap;left:1157.2px;top:87.9px;font-size:14.5px;line-height:14.5px;color:#a8a8a8;letter-spacing:-0.27px;">A</span>
<span style="position:absolute;white-space:nowrap;left:1157.6px;top:101.9px;font-size:14.5px;line-height:14.5px;color:#a8a8a8;letter-spacing:-0.26px;">Z</span>
<svg style="left:0;top:0" width="1" height="1" ><path d="M1169.6 94.2 H1184.8 L1178.8 101.4 V109.2 H1175.6 V101.4z" fill="#f1f1f1" stroke="#a8a8a8" stroke-width="1.05" stroke-linejoin="round"/></svg>
<span style="position:absolute;white-space:nowrap;left:1154.4px;top:122.7px;font-size:11.4px;line-height:11.4px;color:#a3a3a3;letter-spacing:0.24px;">Sort &amp;</span>
<span style="position:absolute;white-space:nowrap;left:1152.7px;top:139.1px;font-size:11.4px;line-height:11.4px;color:#a3a3a3;letter-spacing:-0.06px;">Filter</span>
<svg style="left:0;top:0" width="1" height="1"><path d="M1182.0 143.8 L1184.3 146.2 L1186.6 143.8" fill="none" stroke="#b5b5b5" stroke-width="1.1" stroke-linecap="round" stroke-linejoin="round"/></svg>
<svg style="left:0;top:0" width="1" height="1" ><circle cx="1220.6" cy="97.6" r="10" fill="none" stroke="#444" stroke-width="1.1"/><path d="M1213.4 104.8 L1202.6 115.4" stroke="#444" stroke-width="1.1" stroke-linecap="round"/></svg>
<span style="position:absolute;white-space:nowrap;left:1199.6px;top:122.7px;font-size:11.4px;line-height:11.4px;color:#242424;letter-spacing:0.38px;">Find &amp;</span>
<span style="position:absolute;white-space:nowrap;left:1196.3px;top:139.1px;font-size:11.4px;line-height:11.4px;color:#242424;letter-spacing:-0.18px;">Select</span>
<svg style="left:0;top:0" width="1" height="1"><path d="M1231.2 143.8 L1233.5 146.2 L1235.8 143.8" fill="none" stroke="#333" stroke-width="1.2" stroke-linecap="round" stroke-linejoin="round"/></svg>
<span style="position:absolute;white-space:nowrap;left:1156.5px;top:162.7px;font-size:11.4px;line-height:11.4px;color:#242424;letter-spacing:0.15px;">Editing</span>
<div class="abs" style="left:1248.5px;top:84px;width:1px;height:88px;background:#d1d1d1"></div>
<svg style="left:0;top:0" width="1" height="1" ><g stroke="#b9b9b9" stroke-width="1.05" fill="none">
<rect x="1264.5" y="85.5" width="31" height="31" fill="#e9e9e9"/>
<path d="M1264.5 88.6 H1295.5" stroke="#c9c9c9" stroke-width="3"/>
<path d="M1264.5 98 H1295.5 M1264.5 107.5 H1295.5 M1274.8 85.5 V116.5 M1285.2 85.5 V116.5"/>
<circle cx="1279" cy="98.4" r="9.6" fill="#ededed" stroke="#ababab" stroke-width="1.2"/>
<rect x="1273.6" y="98" width="3" height="5.4" fill="#c4c4c4" stroke="none"/>
<rect x="1277.6" y="92.6" width="3.4" height="10.8" fill="#c4c4c4" stroke="none"/>
<rect x="1282" y="95.6" width="3" height="7.8" fill="#c4c4c4" stroke="none"/>
<path d="M1286 105.4 L1295.6 116" stroke="#ababab" stroke-width="1.6"/>
</g></svg>
<span style="position:absolute;white-space:nowrap;left:1259.5px;top:122.7px;font-size:11.4px;line-height:11.4px;color:#a3a3a3;letter-spacing:-0.01px;">Analyze</span>
<span style="position:absolute;white-space:nowrap;left:1268.7px;top:139.1px;font-size:11.4px;line-height:11.4px;color:#a3a3a3;letter-spacing:-0.35px;">Data</span>
<span style="position:absolute;white-space:nowrap;left:1259.0px;top:162.7px;font-size:11.4px;line-height:11.4px;color:#242424;letter-spacing:-0.22px;">Analysis</span>
<div class="abs" style="left:1310.5px;top:84px;width:1px;height:88px;background:#d1d1d1"></div>
<svg style="left:0;top:0" width="1" height="1"><path d="M1338.7 161.9 L1343.2 166.5 L1347.7 161.9" fill="none" stroke="#333" stroke-width="1.2" stroke-linecap="round" stroke-linejoin="round"/></svg>
<div class="abs" style="left:8px;top:187px;width:101px;height:24px;border-radius:4px;background:#fff;box-shadow:0 0 0 1px rgba(0,0,0,.05)"></div>
<span style="position:absolute;white-space:nowrap;left:15.6px;top:193.7px;font-size:12.5px;line-height:12.5px;color:#242424;letter-spacing:-0.20px;">H135</span>
<svg style="left:0;top:0" width="1" height="1"><path d="M95.2 197.7 L99.0 201.5 L102.8 197.7" fill="none" stroke="#333" stroke-width="1.1" stroke-linecap="round" stroke-linejoin="round"/></svg>
<svg style="left:0;top:0" width="1" height="1" ><circle cx="120" cy="194.8" r="0.95" fill="#333"/><circle cx="120" cy="199" r="0.95" fill="#333"/><circle cx="120" cy="203.2" r="0.95" fill="#333"/></svg>
<div class="abs" style="left:131px;top:187px;width:72px;height:24px;border-radius:4px;background:#fff;box-shadow:0 0 0 1px rgba(0,0,0,.05)"></div>
<svg style="left:0;top:0" width="1" height="1" ><path d="M137 193.2 L148.8 204.8 M148.8 193.2 L137 204.8" stroke="#e0434b" stroke-width="1.1" fill="none" stroke-linecap="round"/></svg>
<svg style="left:0;top:0" width="1" height="1" ><path d="M159.4 199.6 L164.6 204.6 L174.8 193.4" stroke="#3f9a56" stroke-width="1.2" fill="none" stroke-linecap="round" stroke-linejoin="round"/></svg>
<span style="position:absolute;white-space:nowrap;left:184.2px;top:191.2px;font-size:16px;line-height:16px;color:#2a2a2a;letter-spacing:1.28px;font-style:italic;font-family:'Liberation Serif',serif;-webkit-text-stroke:0.35px #2a2a2a;">fx</span>
<div class="abs" style="left:209px;top:187px;width:1149px;height:24px;border-radius:4px;background:#fff;box-shadow:0 0 0 1px rgba(0,0,0,.05)"></div>
<svg style="left:0;top:0" width="1" height="1"><path d="M1344.3 195.3 L1348.5 199.5 L1352.7 195.3" fill="none" stroke="#333" stroke-width="1.1" stroke-linecap="round" stroke-linejoin="round"/></svg>
<div class="abs" style="left:1346.5px;top:219px;width:17.5px;height:447px;border-radius:8px 8px 8px 8px;background:#f4f4f7"></div>
<svg style="left:0;top:0" width="1" height="1" ><path d="M1350.8 230.4 L1355.4 224 L1360 230.4z" fill="#6e6e6e" stroke="#6e6e6e" stroke-width="0.8" stroke-linejoin="round"/></svg>
<svg style="left:0;top:0" width="1" height="1" ><path d="M1350.8 655.2 L1355.4 661.6 L1360 655.2z" fill="#6e6e6e" stroke="#6e6e6e" stroke-width="0.8" stroke-linejoin="round"/></svg>
<div class="abs" style="left:1352px;top:397px;width:7px;height:31px;border-radius:3.5px;background:#6b6b6b"></div>
<div class="abs" style="left:0;top:666px;width:1366px;height:32px;background:#eaeaef"></div>
<div class="abs" style="left:116.5px;top:666px;width:41.5px;height:27px;border-radius:0 0 5px 5px;background:linear-gradient(#fbfdf9,#e3f0da);box-shadow:0 1px 2px rgba(0,0,0,.22)"></div>
<span style="position:absolute;white-space:nowrap;left:124.5px;top:672.8px;font-size:13.6px;line-height:13.6px;color:#1a5c36;letter-spacing:-0.06px;-webkit-text-stroke:0.35px #1a5c36;">JAN</span>
<div class="abs" style="left:124.5px;top:688.3px;width:25.5px;height:2.2px;background:#1e7145"></div>
<div class="abs" style="left:162px;top:672px;width:1px;height:20px;background:#d2d2d6"></div>
<span style="position:absolute;white-space:nowrap;left:175.0px;top:674.7px;font-size:14px;line-height:14px;color:#333;letter-spacing:-0.45px;">Sheet2</span>
<div class="abs" style="left:230px;top:672px;width:1px;height:20px;background:#d2d2d6"></div>
<span style="position:absolute;white-space:nowrap;left:242.5px;top:674.7px;font-size:14px;line-height:14px;color:#333;letter-spacing:-0.56px;">Sheet1</span>
<div class="abs" style="left:296px;top:672px;width:1px;height:20px;background:#d2d2d6"></div>
<svg style="left:0;top:0" width="1" height="1" ><path d="M339 681.5 H350.4 M344.7 675.8 V687.2" stroke="#333" stroke-width="1.1" fill="none"/></svg>
<svg style="left:0;top:0" width="1" height="1" ><path d="M34 676.6 L29.4 681.4 L34 686.2" fill="none" stroke="#a0a0a0" stroke-width="1.2" stroke-linecap="round" stroke-linejoin="round"/></svg>
<svg style="left:0;top:0" width="1" height="1" ><path d="M61.6 676.6 L66.2 681.4 L61.6 686.2" fill="none" stroke="#a0a0a0" stroke-width="1.2" stroke-linecap="round" stroke-linejoin="round"/></svg>
<svg style="left:0;top:0" width="1" height="1" ><circle cx="821.5" cy="677.4" r="0.95" fill="#333"/><circle cx="821.5" cy="681.6" r="0.95" fill="#333"/><circle cx="821.5" cy="685.8" r="0.95" fill="#333"/></svg>
<div class="abs" style="left:838px;top:672.5px;width:506px;height:17.5px;border-radius:9px;background:#f4f4f7"></div>
<div class="abs" style="left:855px;top:677.5px;width:453px;height:8px;border-radius:4px;background:#6e6e6e"></div>
<svg style="left:0;top:0" width="1" height="1" ><path d="M849.4 677.4 L843.2 681.6 L849.4 685.8z" fill="#6e6e6e" stroke="#6e6e6e" stroke-width="0.8" stroke-linejoin="round"/></svg>
<svg style="left:0;top:0" width="1" height="1" ><path d="M1332.4 677.4 L1338.6 681.6 L1332.4 685.8z" fill="#6e6e6e" stroke="#6e6e6e" stroke-width="0.8" stroke-linejoin="round"/></svg>
<div class="abs" style="left:0;top:698px;width:1366px;height:21px;background:#f3f3f5"></div>
<span style="position:absolute;white-space:nowrap;left:8.2px;top:702.8px;font-size:12px;line-height:12px;color:#333;letter-spacing:-0.38px;">Enter</span>
<svg style="left:0;top:0" width="1" height="1" ><g fill="none" stroke="#444" stroke-width="1" stroke-linecap="round" stroke-linejoin="round">
<circle cx="64.6" cy="704" r="1.5"/>
<path d="M59.4 706.6 L64.6 707.8 L69.8 706.6 M64.6 707.8 V710.4 L61.6 715 M64.6 710.4 L66 712.4"/>
<path d="M66.2 710.6 L71 715.4 M71 710.6 L66.2 715.4"/>
</g></svg>
<span style="position:absolute;white-space:nowrap;left:76.0px;top:702.8px;font-size:12px;line-height:12px;color:#333;letter-spacing:-0.29px;">Accessibility: Investigate</span>
<svg style="left:0;top:0" width="1" height="1" ><g fill="none" stroke="#b4b4b4" stroke-width="1"><rect x="1079.5" y="703.5" width="11" height="10"/><path d="M1079.5 706.8 H1090.5 M1079.5 710.2 H1090.5 M1083.2 703.5 V713.5 M1086.8 703.5 V713.5"/></g></svg>
<svg style="left:0;top:0" width="1" height="1" ><g fill="none" stroke="#b4b4b4" stroke-width="1"><rect x="1120.5" y="703.5" width="11" height="10"/><rect x="1123" y="705.8" width="6" height="5.6"/><path d="M1124.4 707.6 H1127.6 M1124.4 709.4 H1127.6"/></g></svg>
<svg style="left:0;top:0" width="1" height="1" ><g fill="none" stroke="#b4b4b4" stroke-width="1"><rect x="1160.5" y="703.5" width="11" height="10"/><path d="M1164 703.5 V708.4 H1168 V703.5 M1160.5 708.4 H1171.5"/></g></svg>
<svg style="left:0;top:0" width="1" height="1" ><path d="M1192.6 708.5 H1199" stroke="#b4b4b4" stroke-width="1"/><path d="M1205 708.5 H1305" stroke="#b4b4b4" stroke-width="1"/><path d="M1255.5 705.6 V711.4" stroke="#999" stroke-width="1.2"/><path d="M1310.6 708.5 H1317.6 M1314.1 705 V712" stroke="#b4b4b4" stroke-width="1"/></svg>
<span style="position:absolute;white-space:nowrap;left:1331.7px;top:702.9px;font-size:11.5px;line-height:11.5px;color:#b4b4b4;letter-spacing:-0.91px;">79%</span>
<div id="grid">
<div id="gl"></div><div style="left:0;top:0;width:1344px;height:1px;background:#eae9f0"></div>
<div id="corner" style="left:0;top:1px;width:22px;height:47px;background:#f5f5f5"><svg style="left:12px;top:4px" width="8" height="8"><path d="M7 0.5 V7 H0.5z" fill="#dedede"/></svg><span style="position:absolute;left:0;width:21px;text-align:center;top:33px;font-size:11.8px;line-height:12px;color:#505050">1</span></div>
<div class="vl" style="left:1149px"></div>
<div class="vl" style="left:931px"></div>
<div class="vl" style="left:830px"></div>
<div class="vl" style="left:685px"></div>
<div class="vl" style="left:603px"></div>
<div class="vl" style="left:552px"></div>
<div class="vl" style="left:501px"></div>
<div class="vl" style="left:426px"></div>
<div class="vl" style="left:375px"></div>
<div class="vl" style="left:213px"></div>
<div class="vl" style="left:162px"></div>
<div class="vl" style="left:87px"></div>
<div class="ch" style="left:22px;width:66px"><b style="left:23.0px">A</b></div>
<div class="ch" style="left:88px;width:75px"><b style="left:27.5px">B</b></div>
<div class="ch" style="left:163px;width:51px"><b style="left:15.5px">C</b></div>
<div class="ch" style="left:214px;width:162px"><b style="left:71.0px">D</b></div>
<div class="ch" style="left:376px;width:51px"><b style="left:15.5px">E</b></div>
<div class="ch" style="left:427px;width:75px"><b style="left:27.5px">F</b></div>
<div class="ch" style="left:502px;width:51px"><b style="left:15.5px">G</b></div>
<div class="ch sel" style="left:553px;width:51px"><b style="left:15.5px">H</b></div>
<div class="ch" style="left:604px;width:82px"><b style="left:31.0px">I</b></div>
<div class="ch" style="left:686px;width:145px"><b style="left:62.5px">J</b></div>
<div class="ch" style="left:831px;width:101px"><b style="left:40.5px">K</b></div>
<div class="ch" style="left:932px;width:218px"><b style="left:99.0px">L</b></div>
<div class="ch" style="left:1150px;width:194px"><b style="left:89.5px">M</b></div>
<div class="hc" style="left:22px;width:66px"><div><span style="letter-spacing:-0.26px">DATE</span></div></div>
<div class="hc" style="left:88px;width:75px"><div><span style="letter-spacing:0.41px">Transaction</span><br><span style="letter-spacing:0.31px">Code</span></div></div>
<div class="hc" style="left:163px;width:51px"><div><span style="letter-spacing:0.65px">Action</span></div></div>
<div class="hc" style="left:214px;width:162px"><div><span style="letter-spacing:0.53px">Customer Name</span></div></div>
<div class="hc" style="left:376px;width:51px"><div><span style="letter-spacing:0.44px">Currency</span></div></div>
<div class="hc" style="left:427px;width:75px"><div><span style="letter-spacing:0.50px">Original</span><br><span style="letter-spacing:0.89px">amount</span></div></div>
<div class="hc" style="left:502px;width:51px"><div><span style="letter-spacing:0.25px">Rate</span></div></div>
<div class="hc" style="left:553px;width:51px"><div><span style="letter-spacing:0.15px">Charges</span></div></div>
<div class="hc" style="left:604px;width:82px"><div><span style="letter-spacing:0.54px">PHP Amount</span></div></div>
<div class="hc" style="left:686px;width:145px"><div><span style="letter-spacing:0.48px">Beneficiary</span></div></div>
<div class="hc" style="left:831px;width:101px"><div><span style="letter-spacing:0.62px">Country</span><br><span style="letter-spacing:0.59px">Destination</span></div></div>
<div class="hc" style="left:932px;width:218px"><div><span style="letter-spacing:0.62px">Remitter</span></div></div>
<div class="hc" style="left:1150px;width:199px"><div><span style="letter-spacing:0.46px">Purpose of Payment</span></div></div>
<div class="rn" style="top:49px">128</div>
<div class="c" style="left:22px;top:49px;width:66px;letter-spacing:-0.11px">JAN 12 2023</div>
<div class="c" style="left:88px;top:49px;width:75px;letter-spacing:0.09px">23011207</div>
<div class="c" style="left:163px;top:49px;width:51px;letter-spacing:-0.83px">SELL</div>
<div class="c" style="left:376px;top:49px;width:51px;letter-spacing:-0.24px">USD</div>
<div class="c" style="left:427px;top:49px;width:75px;letter-spacing:-0.01px">$10,714.68</div>
<div class="c" style="left:502px;top:49px;width:51px;letter-spacing:-0.01px">55.35</div>
<div class="c" style="left:553px;top:49px;width:51px;letter-spacing:-0.01px">600</div>
<div class="c" style="left:604px;top:49px;width:82px;letter-spacing:-0.06px">₱593,657.54</div>
<div class="c" style="left:831px;top:49px;width:101px;letter-spacing:0.04px">HONGKONG</div>
<div class="c" style="left:1150px;top:49px;width:199px;letter-spacing:-0.13px">FOOTWEAR</div>
<div class="rn" style="top:65px">129</div>
<div class="c" style="left:22px;top:65px;width:66px;letter-spacing:-0.11px">JAN 12 2023</div>
<div class="c" style="left:88px;top:65px;width:75px;letter-spacing:0.09px">23011208</div>
<div class="c" style="left:163px;top:65px;width:51px;letter-spacing:-0.83px">SELL</div>
<div class="c" style="left:376px;top:65px;width:51px;letter-spacing:-0.24px">USD</div>
<div class="c" style="left:427px;top:65px;width:75px;letter-spacing:-0.01px">$38,129.76</div>
<div class="c" style="left:502px;top:65px;width:51px;letter-spacing:-0.01px">55.35</div>
<div class="c" style="left:553px;top:65px;width:51px;letter-spacing:-0.01px">600</div>
<div class="c" style="left:604px;top:65px;width:82px;letter-spacing:0.06px">₱2,111,082.22</div>
<div class="c" style="left:831px;top:65px;width:101px;letter-spacing:0.04px">HONGKONG</div>
<div class="c" style="left:1150px;top:65px;width:199px;letter-spacing:-0.13px">FOOTWEAR</div>
<div class="rn" style="top:81px">130</div>
<div class="c" style="left:22px;top:81px;width:66px;letter-spacing:-0.11px">JAN 12 2023</div>
<div class="c" style="left:88px;top:81px;width:75px;letter-spacing:0.09px">23011209</div>
<div class="c" style="left:163px;top:81px;width:51px;letter-spacing:-0.83px">SELL</div>
<div class="c" style="left:376px;top:81px;width:51px;letter-spacing:-0.24px">USD</div>
<div class="c" style="left:427px;top:81px;width:75px;letter-spacing:-0.01px">$139,700.00</div>
<div class="c" style="left:502px;top:81px;width:51px;letter-spacing:-0.01px">55.2</div>
<div class="c" style="left:553px;top:81px;width:51px;letter-spacing:-0.01px">0</div>
<div class="c" style="left:604px;top:81px;width:82px;letter-spacing:0.00px">₱7,711,440.00</div>
<div class="c" style="left:831px;top:81px;width:101px;overflow:hidden"><span style="letter-spacing:-0.30px;position:relative;left:50%;margin-left:-100px;width:200px;display:inline-block">FOREIGN EXCHANGE</span></div>
<div class="c" style="left:1150px;top:81px;width:199px;letter-spacing:0.02px">-</div>
<div class="rn" style="top:97px">131</div>
<div class="c" style="left:22px;top:97px;width:66px;letter-spacing:-0.11px">JAN 12 2023</div>
<div class="c" style="left:88px;top:97px;width:75px;letter-spacing:0.09px">23011210</div>
<div class="c" style="left:163px;top:97px;width:51px;letter-spacing:-0.83px">SELL</div>
<div class="c" style="left:376px;top:97px;width:51px;letter-spacing:-0.42px">EUR</div>
<div class="c" style="left:427px;top:97px;width:75px;letter-spacing:-0.01px">$156,944.03</div>
<div class="c" style="left:502px;top:97px;width:51px;letter-spacing:-0.01px">59.6</div>
<div class="c" style="left:553px;top:97px;width:51px;letter-spacing:-0.01px">1000</div>
<div class="c" style="left:604px;top:97px;width:82px;letter-spacing:-0.06px">₱9,354,864.19</div>
<div class="c" style="left:831px;top:97px;width:101px;letter-spacing:0.04px">ITALY</div>
<div class="c" style="left:1150px;top:97px;width:199px;letter-spacing:0.01px">PUMPS</div>
<div class="rn" style="top:113px">132</div>
<div class="c" style="left:22px;top:113px;width:66px;letter-spacing:-0.11px">JAN 12 2023</div>
<div class="c" style="left:88px;top:113px;width:75px;letter-spacing:0.18px">23011211</div>
<div class="c" style="left:163px;top:113px;width:51px;letter-spacing:-0.23px">BUY</div>
<div class="c" style="left:376px;top:113px;width:51px;letter-spacing:-0.42px">EUR</div>
<div class="c" style="left:427px;top:113px;width:75px;letter-spacing:-0.01px">$156,944.03</div>
<div class="c" style="left:502px;top:113px;width:51px;letter-spacing:-0.01px">59.53</div>
<div class="c" style="left:553px;top:113px;width:51px;letter-spacing:-0.01px">550.5</div>
<div class="c" style="left:604px;top:113px;width:82px;letter-spacing:-0.06px">₱9,343,428.61</div>
<div class="c" style="left:831px;top:113px;width:101px;overflow:hidden"><span style="letter-spacing:-0.30px;position:relative;left:50%;margin-left:-100px;width:200px;display:inline-block">FOREIGN EXCHANGE</span></div>
<div class="c" style="left:1150px;top:113px;width:199px;letter-spacing:0.02px">-</div>
<div class="rn" style="top:129px">133</div>
<div class="c" style="left:22px;top:129px;width:66px;letter-spacing:-0.11px">JAN 12 2023</div>
<div class="c" style="left:88px;top:129px;width:75px;letter-spacing:0.09px">23011212</div>
<div class="c" style="left:163px;top:129px;width:51px;letter-spacing:-0.83px">SELL</div>
<div class="c" style="left:376px;top:129px;width:51px;letter-spacing:-0.24px">USD</div>
<div class="c" style="left:427px;top:129px;width:75px;letter-spacing:-0.01px">$64,127.90</div>
<div class="c" style="left:502px;top:129px;width:51px;letter-spacing:-0.01px">55.3</div>
<div class="c" style="left:553px;top:129px;width:51px;letter-spacing:-0.01px">500</div>
<div class="c" style="left:604px;top:129px;width:82px;letter-spacing:-0.06px">₱3,546,772.87</div>
<div class="c" style="left:831px;top:129px;width:101px;letter-spacing:0.05px">CHINA</div>
<div class="c" style="left:1150px;top:129px;width:199px;letter-spacing:-0.41px">BAG SHORTS SHIRTS</div>
<div class="rn" style="top:145px">134</div>
<div class="c" style="left:22px;top:145px;width:66px;letter-spacing:-0.11px">JAN 12 2023</div>
<div class="c" style="left:88px;top:145px;width:75px;letter-spacing:0.09px">23011213</div>
<div class="c" style="left:163px;top:145px;width:51px;letter-spacing:-0.83px">SELL</div>
<div class="c" style="left:376px;top:145px;width:51px;letter-spacing:-0.24px">USD</div>
<div class="c" style="left:427px;top:145px;width:75px;letter-spacing:-0.02px">$5,240.00</div>
<div class="c" style="left:502px;top:145px;width:51px;letter-spacing:-0.01px">55.38</div>
<div class="c" style="left:553px;top:145px;width:51px;letter-spacing:-0.01px">600</div>
<div class="c" style="left:604px;top:145px;width:82px;letter-spacing:-0.06px">₱290,791.20</div>
<div class="c" style="left:831px;top:145px;width:101px;letter-spacing:0.04px">HONGKONG</div>
<div class="c" style="left:1150px;top:145px;width:199px;letter-spacing:-0.41px">TEMPERED GLASS</div>
<div class="rn cur" style="top:161px">135</div>
<div class="c" style="left:22px;top:161px;width:66px;letter-spacing:-0.11px">JAN 12 2023</div>
<div class="c" style="left:88px;top:161px;width:75px;letter-spacing:0.09px">23011214</div>
<div class="c" style="left:163px;top:161px;width:51px;letter-spacing:-0.83px">SELL</div>
<div class="c" style="left:376px;top:161px;width:51px;letter-spacing:-0.24px">USD</div>
<div class="c" style="left:427px;top:161px;width:75px;letter-spacing:-0.02px">$4,500.00</div>
<div class="c" style="left:502px;top:161px;width:51px;letter-spacing:-0.01px">55.36</div>
<div class="c" style="left:604px;top:161px;width:82px;letter-spacing:-0.06px">₱249,720.00</div>
<div class="c" style="left:831px;top:161px;width:101px;letter-spacing:-0.20px">USA</div>
<div class="c" style="left:1150px;top:161px;width:199px;letter-spacing:-0.18px">FINANCIAL ASSISTANCE</div>
<div class="rn" style="top:177px">136</div>
<div class="c" style="left:22px;top:177px;width:66px;letter-spacing:-0.11px">JAN 12 2023</div>
<div class="c" style="left:88px;top:177px;width:75px;letter-spacing:0.09px">23011215</div>
<div class="c" style="left:163px;top:177px;width:51px;letter-spacing:-0.83px">SELL</div>
<div class="c" style="left:376px;top:177px;width:51px;letter-spacing:-0.24px">USD</div>
<div class="c" style="left:427px;top:177px;width:75px;letter-spacing:-0.01px">$29,403.38</div>
<div class="c" style="left:502px;top:177px;width:51px;letter-spacing:-0.01px">55.36</div>
<div class="c" style="left:553px;top:177px;width:51px;letter-spacing:-0.01px">0</div>
<div class="c" style="left:604px;top:177px;width:82px;letter-spacing:-0.06px">₱1,627,771.12</div>
<div class="c" style="left:831px;top:177px;width:101px;overflow:hidden"><span style="letter-spacing:-0.30px;position:relative;left:50%;margin-left:-100px;width:200px;display:inline-block">FOREIGN EXCHANGE</span></div>
<div class="c" style="left:1150px;top:177px;width:199px;letter-spacing:0.02px">-</div>
<div class="rn" style="top:193px">137</div>
<div class="c" style="left:22px;top:193px;width:66px;letter-spacing:-0.11px">JAN 12 2023</div>
<div class="c" style="left:88px;top:193px;width:75px;letter-spacing:0.09px">23011216</div>
<div class="c" style="left:163px;top:193px;width:51px;letter-spacing:-0.83px">SELL</div>
<div class="c" style="left:376px;top:193px;width:51px;letter-spacing:-0.07px">HKD</div>
<div class="c" style="left:427px;top:193px;width:75px;letter-spacing:-0.02px">$3,000.00</div>
<div class="c" style="left:502px;top:193px;width:51px;letter-spacing:-0.01px">7.14</div>
<div class="c" style="left:553px;top:193px;width:51px;letter-spacing:-0.01px">150</div>
<div class="c" style="left:604px;top:193px;width:82px;letter-spacing:-0.07px">₱21,570.00</div>
<div class="c" style="left:831px;top:193px;width:101px;overflow:hidden"><span style="letter-spacing:-0.30px;position:relative;left:50%;margin-left:-100px;width:200px;display:inline-block">FOREIGN EXCHANGE</span></div>
<div class="c" style="left:1150px;top:193px;width:199px;letter-spacing:0.02px">-</div>
<div class="rn" style="top:209px">138</div>
<div class="c" style="left:22px;top:209px;width:66px;letter-spacing:-0.11px">JAN 12 2023</div>
<div class="c" style="left:88px;top:209px;width:75px;letter-spacing:0.09px">23011217</div>
<div class="c" style="left:163px;top:209px;width:51px;letter-spacing:-0.83px">SELL</div>
<div class="c" style="left:376px;top:209px;width:51px;letter-spacing:-0.07px">HKD</div>
<div class="c" style="left:427px;top:209px;width:75px;letter-spacing:-0.01px">$330,000.00</div>
<div class="c" style="left:502px;top:209px;width:51px;letter-spacing:-0.01px">7.13</div>
<div class="c" style="left:553px;top:209px;width:51px;letter-spacing:-0.01px">0</div>
<div class="c" style="left:604px;top:209px;width:82px;letter-spacing:-0.06px">₱2,352,900.00</div>
<div class="c" style="left:831px;top:209px;width:101px;overflow:hidden"><span style="letter-spacing:-0.30px;position:relative;left:50%;margin-left:-100px;width:200px;display:inline-block">FOREIGN EXCHANGE</span></div>
<div class="c" style="left:1150px;top:209px;width:199px;letter-spacing:0.02px">-</div>
<div class="rn" style="top:225px">139</div>
<div class="c" style="left:22px;top:225px;width:66px;letter-spacing:-0.11px">JAN 13 2023</div>
<div class="c" style="left:88px;top:225px;width:75px;letter-spacing:0.09px">23011301</div>
<div class="c" style="left:163px;top:225px;width:51px;letter-spacing:-0.23px">BUY</div>
<div class="c" style="left:376px;top:225px;width:51px;letter-spacing:-0.24px">USD</div>
<div class="c" style="left:427px;top:225px;width:75px;letter-spacing:-0.01px">$200,000.00</div>
<div class="c" style="left:502px;top:225px;width:51px;letter-spacing:-0.01px">55.17</div>
<div class="c" style="left:553px;top:225px;width:51px;letter-spacing:-0.01px">0</div>
<div class="c" style="left:604px;top:225px;width:82px;letter-spacing:0.00px">₱11,034,000.00</div>
<div class="c" style="left:831px;top:225px;width:101px;overflow:hidden"><span style="letter-spacing:-0.30px;position:relative;left:50%;margin-left:-100px;width:200px;display:inline-block">FOREIGN EXCHANGE</span></div>
<div class="c" style="left:1150px;top:225px;width:199px;letter-spacing:0.02px">-</div>
<div class="rn" style="top:241px">140</div>
<div class="c" style="left:22px;top:241px;width:66px;letter-spacing:-0.11px">JAN 13 2023</div>
<div class="c" style="left:88px;top:241px;width:75px;letter-spacing:0.09px">23011302</div>
<div class="c" style="left:163px;top:241px;width:51px;letter-spacing:-0.23px">BUY</div>
<div class="c" style="left:376px;top:241px;width:51px;letter-spacing:-0.07px">HKD</div>
<div class="c" style="left:427px;top:241px;width:75px;letter-spacing:-0.01px">$840,000.00</div>
<div class="c" style="left:502px;top:241px;width:51px;letter-spacing:-0.01px">7.077</div>
<div class="c" style="left:553px;top:241px;width:51px;letter-spacing:-0.01px">0</div>
<div class="c" style="left:604px;top:241px;width:82px;letter-spacing:-0.06px">₱5,944,680.00</div>
<div class="c" style="left:831px;top:241px;width:101px;overflow:hidden"><span style="letter-spacing:-0.30px;position:relative;left:50%;margin-left:-100px;width:200px;display:inline-block">FOREIGN EXCHANGE</span></div>
<div class="c" style="left:1150px;top:241px;width:199px;letter-spacing:0.02px">-</div>
<div class="rn" style="top:257px">141</div>
<div class="c" style="left:22px;top:257px;width:66px;letter-spacing:-0.11px">JAN 13 2023</div>
<div class="c" style="left:88px;top:257px;width:75px;letter-spacing:0.09px">23011303</div>
<div class="c" style="left:163px;top:257px;width:51px;letter-spacing:-0.83px">SELL</div>
<div class="c" style="left:376px;top:257px;width:51px;letter-spacing:-0.24px">USD</div>
<div class="c" style="left:427px;top:257px;width:75px;letter-spacing:-0.01px">$65,000.00</div>
<div class="c" style="left:502px;top:257px;width:51px;letter-spacing:-0.01px">55.17</div>
<div class="c" style="left:553px;top:257px;width:51px;letter-spacing:-0.01px">0</div>
<div class="c" style="left:604px;top:257px;width:82px;letter-spacing:-0.06px">₱3,586,050.00</div>
<div class="c" style="left:831px;top:257px;width:101px;overflow:hidden"><span style="letter-spacing:-0.30px;position:relative;left:50%;margin-left:-100px;width:200px;display:inline-block">FOREIGN EXCHANGE</span></div>
<div class="c" style="left:1150px;top:257px;width:199px;letter-spacing:0.02px">-</div>
<div class="rn" style="top:273px">142</div>
<div class="c" style="left:22px;top:273px;width:66px;letter-spacing:-0.11px">JAN 13 2023</div>
<div class="c" style="left:88px;top:273px;width:75px;letter-spacing:0.09px">23011304</div>
<div class="c" style="left:163px;top:273px;width:51px;letter-spacing:-0.83px">SELL</div>
<div class="c" style="left:376px;top:273px;width:51px;letter-spacing:-0.24px">USD</div>
<div class="c" style="left:427px;top:273px;width:75px;letter-spacing:-0.01px">$87,771.60</div>
<div class="c" style="left:502px;top:273px;width:51px;letter-spacing:-0.01px">55.22</div>
<div class="c" style="left:553px;top:273px;width:51px;letter-spacing:-0.01px">600</div>
<div class="c" style="left:604px;top:273px;width:82px;letter-spacing:-0.06px">₱4,847,347.75</div>
<div class="c" style="left:831px;top:273px;width:101px;letter-spacing:0.25px">VIETNAM</div>
<div class="c" style="left:1150px;top:273px;width:199px;letter-spacing:-0.05px">YARN</div>
<div class="rn" style="top:289px">143</div>
<div class="c" style="left:22px;top:289px;width:66px;letter-spacing:-0.11px">JAN 13 2023</div>
<div class="c" style="left:88px;top:289px;width:75px;letter-spacing:0.09px">23011305</div>
<div class="c" style="left:163px;top:289px;width:51px;letter-spacing:-0.83px">SELL</div>
<div class="c" style="left:376px;top:289px;width:51px;letter-spacing:-0.24px">USD</div>
<div class="c" style="left:427px;top:289px;width:75px;letter-spacing:-0.01px">$53,214.08</div>
<div class="c" style="left:502px;top:289px;width:51px;letter-spacing:-0.01px">55.22</div>
<div class="c" style="left:553px;top:289px;width:51px;letter-spacing:-0.01px">600</div>
<div class="c" style="left:604px;top:289px;width:82px;letter-spacing:-0.06px">₱2,939,081.50</div>
<div class="c" style="left:831px;top:289px;width:101px;letter-spacing:0.26px">INDIA</div>
<div class="c" style="left:1150px;top:289px;width:199px;letter-spacing:-0.05px">YARN</div>
<div class="rn" style="top:305px">144</div>
<div class="c" style="left:22px;top:305px;width:66px;letter-spacing:-0.11px">JAN 13 2023</div>
<div class="c" style="left:88px;top:305px;width:75px;letter-spacing:0.09px">23011306</div>
<div class="c" style="left:163px;top:305px;width:51px;letter-spacing:-0.83px">SELL</div>
<div class="c" style="left:376px;top:305px;width:51px;letter-spacing:-0.24px">USD</div>
<div class="c" style="left:427px;top:305px;width:75px;letter-spacing:-0.02px">$8,310.00</div>
<div class="c" style="left:502px;top:305px;width:51px;letter-spacing:-0.01px">55.14</div>
<div class="c" style="left:553px;top:305px;width:51px;letter-spacing:-0.01px">600</div>
<div class="c" style="left:604px;top:305px;width:82px;letter-spacing:-0.06px">₱458,813.40</div>
<div class="c" style="left:831px;top:305px;width:101px;letter-spacing:0.05px">CHINA</div>
<div class="c" style="left:1150px;top:305px;width:199px;letter-spacing:-0.52px">SAFETY GLOVES</div>
<div class="rn" style="top:321px">145</div>
<div class="c" style="left:22px;top:321px;width:66px;letter-spacing:-0.11px">JAN 13 2023</div>
<div class="c" style="left:88px;top:321px;width:75px;letter-spacing:0.09px">23011307</div>
<div class="c" style="left:163px;top:321px;width:51px;letter-spacing:-0.83px">SELL</div>
<div class="c" style="left:376px;top:321px;width:51px;letter-spacing:-0.24px">USD</div>
<div class="c" style="left:427px;top:321px;width:75px;letter-spacing:-0.02px">$2,053.00</div>
<div class="c" style="left:502px;top:321px;width:51px;letter-spacing:-0.01px">55.14</div>
<div class="c" style="left:553px;top:321px;width:51px;letter-spacing:-0.01px">600</div>
<div class="c" style="left:604px;top:321px;width:82px;letter-spacing:0.01px">₱113,802.42</div>
<div class="c" style="left:831px;top:321px;width:101px;letter-spacing:0.05px">CHINA</div>
<div class="c" style="left:1150px;top:321px;width:199px;letter-spacing:-0.52px">SAFETY GLOVES</div>
<div class="rn" style="top:337px">146</div>
<div class="c" style="left:22px;top:337px;width:66px;letter-spacing:-0.11px">JAN 13 2023</div>
<div class="c" style="left:88px;top:337px;width:75px;letter-spacing:0.09px">23011308</div>
<div class="c" style="left:163px;top:337px;width:51px;letter-spacing:-0.83px">SELL</div>
<div class="c" style="left:376px;top:337px;width:51px;letter-spacing:-0.24px">USD</div>
<div class="c" style="left:427px;top:337px;width:75px;letter-spacing:-0.01px">$800,000.00</div>
<div class="c" style="left:502px;top:337px;width:51px;letter-spacing:0.18px">7.11</div>
<div class="c" style="left:553px;top:337px;width:51px;letter-spacing:-0.01px">0</div>
<div class="c" style="left:604px;top:337px;width:82px;letter-spacing:-0.06px">₱5,688,000.00</div>
<div class="c" style="left:831px;top:337px;width:101px;overflow:hidden"><span style="letter-spacing:-0.30px;position:relative;left:50%;margin-left:-100px;width:200px;display:inline-block">FOREIGN EXCHANGE</span></div>
<div class="c" style="left:1150px;top:337px;width:199px;letter-spacing:0.02px">-</div>
<div class="rn" style="top:353px">147</div>
<div class="c" style="left:22px;top:353px;width:66px;letter-spacing:-0.11px">JAN 13 2023</div>
<div class="c" style="left:88px;top:353px;width:75px;letter-spacing:0.09px">23011309</div>
<div class="c" style="left:163px;top:353px;width:51px;letter-spacing:-0.83px">SELL</div>
<div class="c" style="left:376px;top:353px;width:51px;letter-spacing:-0.24px">USD</div>
<div class="c" style="left:427px;top:353px;width:75px;letter-spacing:-0.01px">$13,324.36</div>
<div class="c" style="left:502px;top:353px;width:51px;letter-spacing:-0.01px">55.17</div>
<div class="c" style="left:553px;top:353px;width:51px;letter-spacing:-0.01px">600</div>
<div class="c" style="left:604px;top:353px;width:82px;letter-spacing:-0.06px">₱735,704.94</div>
<div class="c" style="left:831px;top:353px;width:101px;letter-spacing:0.05px">CHINA</div>
<div class="c" style="left:1150px;top:353px;width:199px;letter-spacing:-0.21px">FURNITURE</div>
<div class="rn" style="top:369px">148</div>
<div class="c" style="left:22px;top:369px;width:66px;letter-spacing:-0.11px">JAN 13 2023</div>
<div class="c" style="left:88px;top:369px;width:75px;letter-spacing:0.09px">23011310</div>
<div class="c" style="left:163px;top:369px;width:51px;letter-spacing:-0.83px">SELL</div>
<div class="c" style="left:376px;top:369px;width:51px;letter-spacing:-0.24px">USD</div>
<div class="c" style="left:427px;top:369px;width:75px;letter-spacing:-0.01px">$41,913.49</div>
<div class="c" style="left:502px;top:369px;width:51px;letter-spacing:-0.01px">55.25</div>
<div class="c" style="left:553px;top:369px;width:51px;letter-spacing:-0.01px">600</div>
<div class="c" style="left:604px;top:369px;width:82px;letter-spacing:-0.06px">₱2,316,320.32</div>
<div class="c" style="left:831px;top:369px;width:101px;letter-spacing:0.05px">CHINA</div>
<div class="c" style="left:1150px;top:369px;width:199px;letter-spacing:-0.29px">CANDIES</div>
<div class="rn" style="top:385px">149</div>
<div class="c" style="left:22px;top:385px;width:66px;letter-spacing:-0.11px">JAN 13 2023</div>
<div class="c" style="left:88px;top:385px;width:75px;letter-spacing:0.18px">23011311</div>
<div class="c" style="left:163px;top:385px;width:51px;letter-spacing:-0.83px">SELL</div>
<div class="c" style="left:376px;top:385px;width:51px;letter-spacing:-0.24px">USD</div>
<div class="c" style="left:427px;top:385px;width:75px;letter-spacing:-0.01px">$50,500.00</div>
<div class="c" style="left:502px;top:385px;width:51px;letter-spacing:-0.01px">55.25</div>
<div class="c" style="left:553px;top:385px;width:51px;letter-spacing:-0.01px">600</div>
<div class="c" style="left:604px;top:385px;width:82px;letter-spacing:-0.06px">₱2,790,725.00</div>
<div class="c" style="left:831px;top:385px;width:101px;letter-spacing:0.04px">HONGKONG</div>
<div class="c" style="left:1150px;top:385px;width:199px;letter-spacing:-0.13px">FOOTWEAR</div>
<div class="rn" style="top:401px">150</div>
<div class="c" style="left:22px;top:401px;width:66px;letter-spacing:-0.11px">JAN 13 2023</div>
<div class="c" style="left:88px;top:401px;width:75px;letter-spacing:0.09px">23011312</div>
<div class="c" style="left:163px;top:401px;width:51px;letter-spacing:-0.83px">SELL</div>
<div class="c" style="left:376px;top:401px;width:51px;letter-spacing:-0.07px">HKD</div>
<div class="c" style="left:427px;top:401px;width:75px;letter-spacing:-0.02px">$7,810.00</div>
<div class="c" style="left:502px;top:401px;width:51px;letter-spacing:-0.01px">7.125</div>
<div class="c" style="left:553px;top:401px;width:51px;letter-spacing:-0.01px">150</div>
<div class="c" style="left:604px;top:401px;width:82px;letter-spacing:-0.07px">₱55,796.25</div>
<div class="c" style="left:831px;top:401px;width:101px;overflow:hidden"><span style="letter-spacing:-0.30px;position:relative;left:50%;margin-left:-100px;width:200px;display:inline-block">FOREIGN EXCHANGE</span></div>
<div class="c" style="left:1150px;top:401px;width:199px;letter-spacing:0.02px">-</div>
<div class="rn" style="top:417px">151</div>
<div class="c" style="left:22px;top:417px;width:66px;letter-spacing:-0.11px">JAN 13 2023</div>
<div class="c" style="left:88px;top:417px;width:75px;letter-spacing:0.09px">23011313</div>
<div class="c" style="left:163px;top:417px;width:51px;letter-spacing:-0.83px">SELL</div>
<div class="c" style="left:376px;top:417px;width:51px;letter-spacing:-0.24px">USD</div>
<div class="c" style="left:427px;top:417px;width:75px;letter-spacing:-0.01px">$171,436.39</div>
<div class="c" style="left:502px;top:417px;width:51px;letter-spacing:-0.01px">55.33</div>
<div class="c" style="left:553px;top:417px;width:51px;letter-spacing:-0.01px">0</div>
<div class="c" style="left:604px;top:417px;width:82px;letter-spacing:-0.06px">₱9,485,575.46</div>
<div class="c" style="left:831px;top:417px;width:101px;letter-spacing:0.05px">CHINA</div>
<div class="c" style="left:1150px;top:417px;width:199px;letter-spacing:-0.40px">FABRICS</div>
<div class="rn" style="top:433px">152</div>
<div class="c" style="left:22px;top:433px;width:66px;letter-spacing:-0.11px">JAN 13 2023</div>
<div class="c" style="left:88px;top:433px;width:75px;letter-spacing:0.09px">23011314</div>
<div class="c" style="left:163px;top:433px;width:51px;letter-spacing:-0.83px">SELL</div>
<div class="c" style="left:376px;top:433px;width:51px;letter-spacing:-0.07px">HKD</div>
<div class="c" style="left:427px;top:433px;width:75px;letter-spacing:-0.01px">$17,000.00</div>
<div class="c" style="left:502px;top:433px;width:51px;letter-spacing:-0.01px">7.125</div>
<div class="c" style="left:553px;top:433px;width:51px;letter-spacing:-0.01px">150</div>
<div class="c" style="left:604px;top:433px;width:82px;letter-spacing:-0.06px">₱121,275.00</div>
<div class="c" style="left:831px;top:433px;width:101px;overflow:hidden"><span style="letter-spacing:-0.30px;position:relative;left:50%;margin-left:-100px;width:200px;display:inline-block">FOREIGN EXCHANGE</span></div>
<div class="c" style="left:1150px;top:433px;width:199px;letter-spacing:0.02px">-</div>
<div class="conf" style="left:213px;width:163px"><div class="cv" style="width:163px;line-height:163px;transform:translateX(-0.5px) scaleX(.92)">CONFIDETIAL</div></div>
<div class="conf" style="left:685px;width:146px"><div class="cv" style="width:146px;line-height:146px;transform:translateX(4.5px) scaleX(.92)">CONFIDETIAL</div></div>
<div class="conf" style="left:931px;width:219px"><div class="cv" style="width:219px;line-height:219px;transform:translateX(2.5px) scaleX(.92)">CONFIDETIAL</div></div>
<div id="frz"></div><div class="rd" style="left:177.8px;top:112.4px"></div><div class="rd" style="left:310.8px;top:94.2px"></div><div class="rd" style="left:937.3px;top:104.4px"></div><div id="selbox"></div><div id="selh"></div><div id="caret"></div>
</div>
</div>
</body>
</html>
